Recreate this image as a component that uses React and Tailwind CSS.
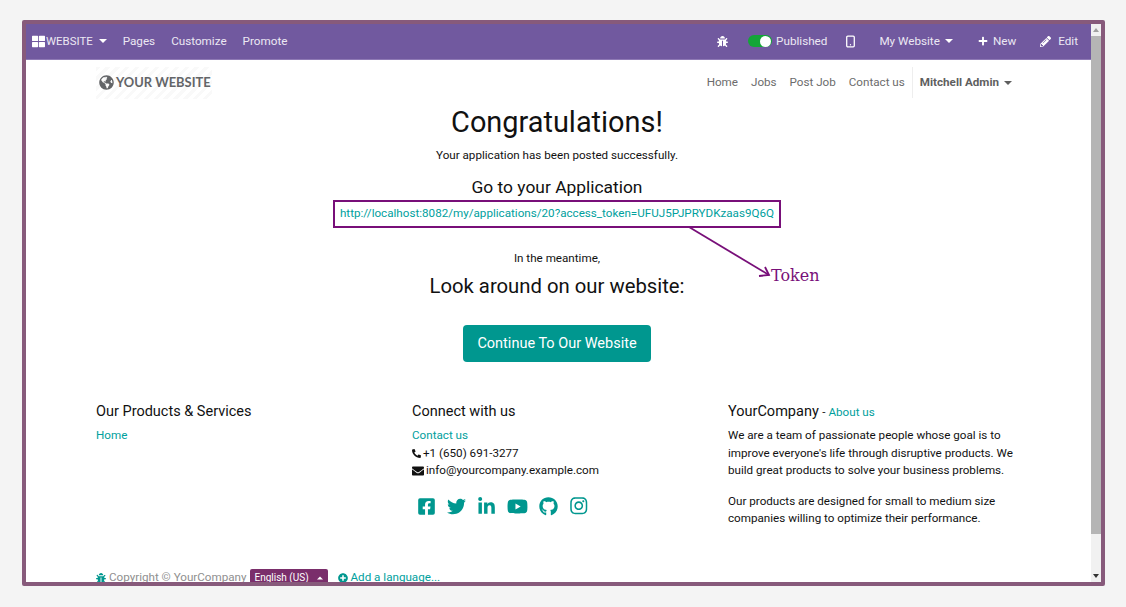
import React from "react";
import { FaThLarge, FaBug, FaPlus, FaPencilAlt, FaPhone, FaEnvelope, FaFacebookSquare, FaTwitter, FaLinkedinIn, FaYoutube, FaGithub, FaInstagram, FaPlusCircle, FaGlobeAmericas } from "react-icons/fa";
import { Smartphone } from "lucide-react";

const Caret = ({ className = "" }) => <span className={`inline-block w-0 h-0 border-x-[4px] border-x-transparent border-t-[4px] border-t-current ${className}`} />;

export default function App() {
  return (
    <div className="w-[1126px] h-[607px] bg-[#f4f4f4] pt-[20px] pl-[22px] font-['Roboto',sans-serif] overflow-hidden">
      <div className="relative w-[1083px] h-[566px] border-[4px] border-[#875a7b] rounded-[2px] bg-white flex overflow-hidden">
        <div className="w-[1065px] shrink-0 flex flex-col h-full overflow-hidden">
          <header className="h-[36px] shrink-0 bg-[#71599f] border-b border-[#8f7ab5] text-[11.7px] text-[#ece8f3] flex items-center justify-between pl-[6px] pr-[13px]">
            <div className="flex items-center">
              <FaThLarge className="text-[13px] text-white mr-[1px]" />
              <span className="text-[11.4px]">WEBSITE</span>
              <Caret className="ml-[6px] text-white" />
              <span className="ml-[16px]">Pages</span>
              <span className="ml-[16px]">Customize</span>
              <span className="ml-[16px]">Promote</span>
            </div>
            <div className="flex items-center">
              <FaBug className="text-[11px] text-white" />
              <span className="ml-[20px] w-[24px] h-[12px] rounded-full bg-[#13a538] flex justify-end items-center pr-[1px]"><span className="w-[11px] h-[11px] rounded-full bg-white" /></span>
              <span className="ml-[4px]">Published</span>
              <Smartphone className="ml-[17px] text-white" size={13} strokeWidth={2.4} />
              <span className="ml-[22px]">My Website</span>
              <Caret className="ml-[5px] text-white" />
              <FaPlus className="ml-[25px] text-[10px] text-white" />
              <span className="ml-[5px]">New</span>
              <FaPencilAlt className="ml-[24px] text-[11px] text-white" />
              <span className="ml-[7px]">Edit</span>
            </div>
          </header>

          <nav className="h-[44px] shrink-0 flex items-center justify-between pt-[1px] pl-[70px] pr-[79px]">
            <div className="relative w-[116px] h-[32px] flex items-center pl-[3px] gap-[2px] text-[#636568] font-['Lato',sans-serif] font-bold text-[12.9px] bg-[repeating-linear-gradient(135deg,#f9f9f9_0,#f9f9f9_3px,#ffffff_3px,#ffffff_7px)]">
              <FaGlobeAmericas className="text-[15px] shrink-0" />
              <span className="whitespace-nowrap">YOUR WEBSITE</span>
            </div>
            <div className="flex items-center text-[11.65px] text-[#6c6c6c]">
              <span>Home</span>
              <span className="ml-[13px]">Jobs</span>
              <span className="ml-[13px]">Post Job</span>
              <span className="ml-[13px]">Contact us</span>
              <span className="ml-[7px] h-[31px] border-l border-[#eeeeee] flex items-center pl-[7px] font-bold text-[#5f5f5f]">Mitchell Admin<Caret className="ml-[5px]" /></span>
            </div>
          </nav>

          <main className="flex flex-col items-center text-[#111111] -ml-[3px]">
            <h1 className="text-[28.9px] leading-[36px]">Congratulations!</h1>
            <p className="text-[11.65px] leading-[18px] mt-[6px]">Your application has been posted successfully.</p>
            <h2 className="text-[17.4px] leading-[20px] mt-[13px]">Go to your Application</h2>
            <div className="mt-[3px] w-[448px] h-[28px] border-2 border-[#780f79] flex items-center justify-center text-[11.65px] whitespace-nowrap text-[#00a09d]">http://localhost:8082/my/applications/20?access_token=UFUJ5PJPRYDKzaas9Q6Q</div>
            <p className="text-[11.65px] leading-[18px] mt-[21px]">In the meantime,</p>
            <h2 className="text-[20.3px] leading-[24px] mt-[7px]">Look around on our website:</h2>
            <button className="mt-[27px] w-[188px] h-[37px] rounded-[4px] bg-[#00978f] text-white text-[14.5px]">Continue To Our Website</button>
          </main>

          <footer className="mt-[40px] pl-[70px] grid grid-cols-[316px_316px_300px] text-[11.65px] leading-[17.5px] text-[#111111]">
            <div>
              <h3 className="text-[14.5px] leading-[20px]">Our Products &amp; Services</h3>
              <div className="mt-[5px] text-[#00a09d]">Home</div>
            </div>
            <div>
              <h3 className="text-[14.5px] leading-[20px]">Connect with us</h3>
              <div className="mt-[5px] text-[#00a09d]">Contact us</div>
              <div className="flex items-center"><FaPhone className="text-[9px] mr-[2px] -scale-x-100" />+1 (650) 691-3277</div>
              <div className="flex items-center"><FaEnvelope className="text-[12px] mr-[2px]" />info@yourcompany.example.com</div>
              <div className="flex items-center mt-[16px] ml-[5px] text-[#00978f] text-[19px] gap-[11px]">
                <FaFacebookSquare />
                <FaTwitter />
                <FaLinkedinIn />
                <FaYoutube className="text-[21px]" />
                <FaGithub />
                <FaInstagram className="text-[19.5px]" />
              </div>
            </div>
            <div>
              <h3 className="text-[14.5px] leading-[20px]">YourCompany <span className="text-[11.65px]">- <span className="text-[#00a09d]">About us</span></span></h3>
              <p className="mt-[5px] w-[290px]">We are a team of passionate people whose goal is to improve everyone's life through disruptive products. We build great products to solve your business problems.</p>
              <p className="mt-[13px] w-[290px]">Our products are designed for small to medium size companies willing to optimize their performance.</p>
            </div>
          </footer>

          <div className="mt-[41px] pl-[70px] h-[18px] shrink-0 flex items-center text-[11.65px] text-[#8f8f8f] whitespace-nowrap">
            <FaBug className="text-[10px] text-[#00978f] mr-[3px]" />
            <span>Copyright © YourCompany</span>
            <span className="ml-[3px] w-[78px] h-[18px] rounded-[2px] bg-[#7a2e6b] text-white text-[10px] flex items-center pl-[5px]">English (US)<Caret className="ml-[7px] rotate-180 scale-75" /></span>
            <FaPlusCircle className="ml-[10px] text-[10px] text-[#00978f]" />
            <span className="ml-[3px] text-[#00a09d]">Add a language...</span>
          </div>
        </div>

        <div className="w-[10px] shrink-0 bg-[#f1f1f1] flex flex-col items-center">
          <div className="h-[12px] flex items-center"><span className="w-0 h-0 border-x-[3px] border-x-transparent border-b-[4px] border-b-[#a0a0a0]" /></div>
          <div className="w-full h-[498px] bg-[#b5b5b5]" />
          <div className="mt-auto h-[12px] flex items-center"><span className="w-0 h-0 border-x-[3px] border-x-transparent border-t-[4px] border-t-[#333333]" /></div>
        </div>

        <svg className="absolute left-[660px] top-[202px]" width="90" height="56" viewBox="0 0 90 56" fill="none" stroke="#780f79" strokeWidth="1.8">
          <path d="M3 1 L83 49" />
          <path d="M73 50 L83 49 L79 41" />
        </svg>
        <span className="absolute left-[745px] top-[240px] font-['DejaVu_Serif',serif] text-[16px] leading-[24px] text-[#780f79]">Token</span>
      </div>
    </div>
  );
}
